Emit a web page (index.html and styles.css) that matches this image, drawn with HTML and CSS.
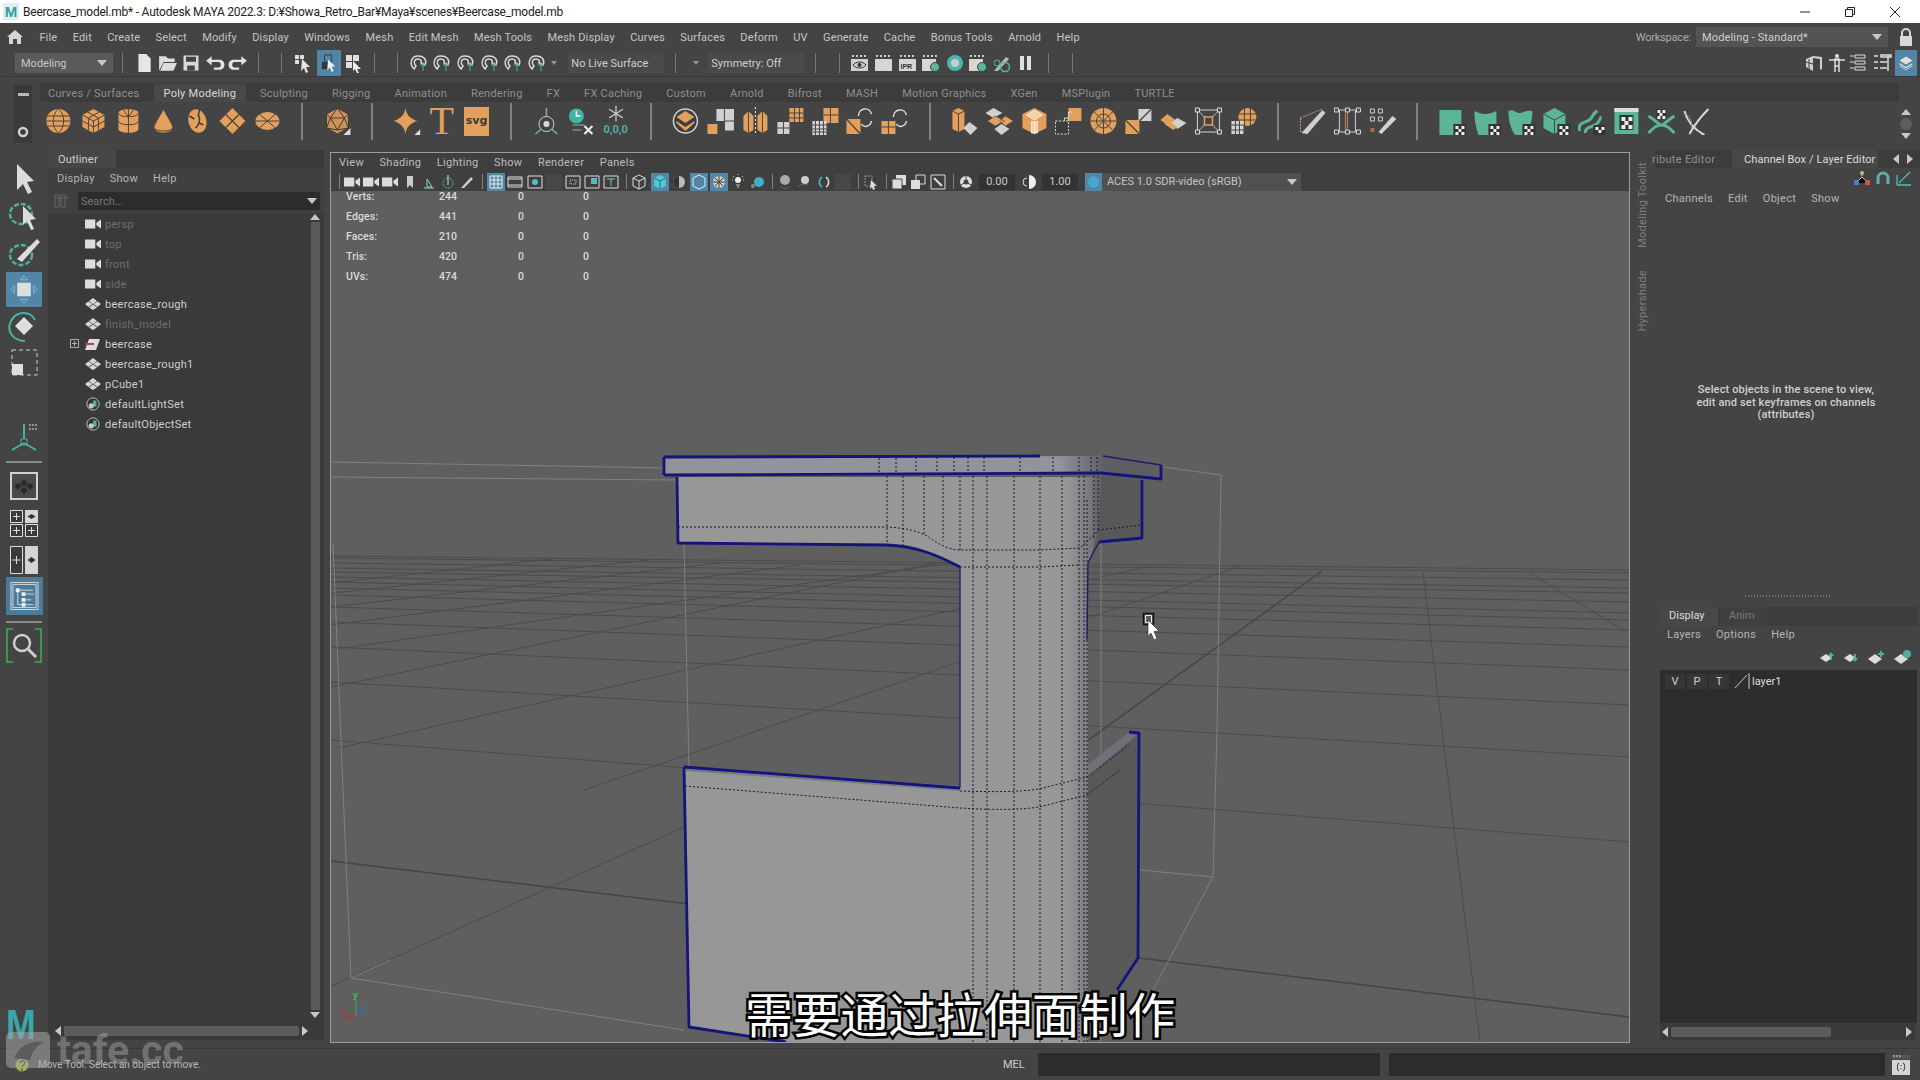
FILE: index.html
```html
<!DOCTYPE html>
<html lang="en">
<head>
<meta charset="utf-8">
<title>Beercase_model.mb - Autodesk MAYA</title>
<link rel="stylesheet" href="styles.css">
</head>
<body>
<svg class="defs" width="0" height="0" aria-hidden="true">
  <defs>
    <symbol id="s-sphere" viewBox="0 0 28 28"><circle cx="14" cy="14" r="12" fill="#e3a05c"/><path d="M3 9h22M2 14h24M3 19h22M14 2c-7 5-7 19 0 24M14 2c7 5 7 19 0 24" fill="none" stroke="#4a4238" stroke-width="1"/></symbol>
    <symbol id="s-cube" viewBox="0 0 28 28"><path d="M14 2l11 6v12l-11 6-11-6V8z" fill="#e3a05c"/><path d="M3 8l11 6 11-6M14 14v12M8 5l11 6v12M20 5L9 11v12M3 14l11 6 11-6" fill="none" stroke="#4a4238"/></symbol>
    <symbol id="s-cyl" viewBox="0 0 28 28"><path d="M4 6c0-5 20-5 20 0v16c0 5-20 5-20 0z" fill="#e3a05c"/><path d="M4 6c0 5 20 5 20 0M4 14c0 5 20 5 20 0M14 2v8M14 10v16M9 3l5 7 5-7" fill="none" stroke="#4a4238"/></symbol>
    <symbol id="s-cone" viewBox="0 0 28 28"><path d="M14 3c3 6 9 14 9 18 0 6-18 6-18 0 0-4 6-12 9-18z" fill="#e3a05c"/><path d="M5 21c0 4 18 4 18 0" fill="none" stroke="#4a4238"/></symbol>
    <symbol id="s-torus" viewBox="0 0 28 28"><ellipse cx="14" cy="14" rx="9" ry="12" fill="#e3a05c" transform="rotate(-15 14 14)"/><path d="M14 8c3 1 3 9-2 13M6 9l5 3M20 18l-4-2M16 3l-1 6" fill="none" stroke="#3e3e3e" stroke-width="1.5"/></symbol>
    <symbol id="s-plane" viewBox="0 0 28 28"><path d="M14 1l13 13-13 13L1 14z" fill="#e3a05c"/><path d="M7.500 7.500l13 13M20.500 7.500l-13 13" stroke="#444" stroke-width="1.200"/></symbol>
    <symbol id="s-disc" viewBox="0 0 28 28"><ellipse cx="14" cy="14" rx="12" ry="9" fill="#e3a05c"/><path d="M2 14h24M6 7l16 14M22 7L6 21" stroke="#444"/></symbol>
    <symbol id="s-platonic" viewBox="0 0 28 28"><path d="M14 1l11 6v14l-11 6-11-6V7z" fill="#cf9257" stroke="#3a3a3a"/><path d="M14 1L7 11l7 12 7-12zM3 7l4 4-4 10 11 2 11-2-4-10 4-4M7 11h14" fill="none" stroke="#3a3a3a"/><path d="M20 28l7-7v7z" fill="#ddd"/></symbol>
    <symbol id="s-star" viewBox="0 0 28 28"><path d="M13 1c1 7 5 11 12 13-7 2-11 6-12 13-1-7-5-11-12-13 7-2 11-6 12-13z" fill="#e3a05c"/><path d="M22 28l6-6v6z" fill="#ddd"/></symbol>
    <symbol id="s-axis" viewBox="0 0 28 28"><path d="M14 1v9" stroke="#6fb79b" stroke-width="1.500"/><circle cx="14" cy="17" r="7.500" fill="none" stroke="#cfcfcf"/><circle cx="14" cy="17" r="3" fill="#d8d8d8"/><path d="M3 27l6-5M25 27l-6-5" stroke="#6fb79b" stroke-width="1.500"/></symbol>
    <symbol id="s-clock" viewBox="0 0 28 28"><circle cx="9" cy="9" r="7.500" fill="#42b3a6"/><path d="M9 4v5h4" fill="none" stroke="#fff" stroke-width="1.500"/><path d="M5 18h12M5 23h9" stroke="#8fb5a8"/><path d="M17 19l8 8M25 19l-8 8" stroke="#eee" stroke-width="2"/></symbol>
    <symbol id="s-snow" viewBox="0 0 28 28"><path d="M14 1v18M6 5l16 10M22 5L6 15" stroke="#c9c9c9" stroke-width="1.500"/></symbol>
    <symbol id="s-ball2" viewBox="0 0 28 28"><circle cx="14" cy="14" r="12" fill="#3e3e3e" stroke="#cfcfcf" stroke-width="1.500"/><path d="M14 4l9 6-9 6-9-6z" fill="#e3a05c"/><path d="M5 14l9 6 9-6v2l-9 8-9-8z" fill="#e3a05c"/></symbol>
    <symbol id="s-sq1" viewBox="0 0 28 28"><path d="M10 2h18v12H10z" fill="#d0d0d0"/><path d="M18 2v12M18 14v10h10V14z" fill="#d0d0d0" stroke="#444"/><path d="M1 17h10v10H1z" fill="#e3a05c"/></symbol>
    <symbol id="s-mirror" viewBox="0 0 28 28"><path d="M2 9l5-5 5 5v14l-5 3-5-3z" fill="#e3a05c"/><path d="M16 9l5-5 5 5v14l-5 3-5-3z" fill="#e3a05c"/><path d="M7 4v22M21 4v22" stroke="#444"/><path d="M14 0v28" stroke="#eee" stroke-dasharray="2 2"/></symbol>
    <symbol id="s-grid1" viewBox="0 0 28 28"><path d="M1 15h12v12H1z" fill="#d0d0d0"/><path d="M13 1h14v14H13z" fill="#e3a05c"/><path d="M7 15v12M1 21h12M18 1v14M23 1v14M13 6h14M13 11h14" stroke="#444"/></symbol>
    <symbol id="s-grid2" viewBox="0 0 28 28"><path d="M12 1h15v15H12z" fill="#e3a05c"/><path d="M12 8h15M19 1v15" stroke="#444"/><path d="M1 14h14v14H1z" fill="#d8d8d8"/><path d="M4 14v14M8 14v14M12 14v14M1 18h14M1 22h14M1 25h14" stroke="#444"/></symbol>
    <symbol id="s-rot1" viewBox="0 0 28 28"><path d="M1 12l14 0v15H1z" fill="#e3a05c"/><path d="M1 12l14 15" stroke="#444" stroke-width="1.300"/><path d="M13 9c0-8 11-10 13-2M26 14c-1 6-8 7-10 3" fill="none" stroke="#ddd" stroke-width="1.500"/></symbol>
    <symbol id="s-rot2" viewBox="0 0 28 28"><path d="M1 14h14v13H1z" fill="#e3a05c"/><path d="M8 14v13M1 20h14" stroke="#444"/><path d="M13 10c0-8 11-10 13-2M26 14c-1 6-8 7-10 3" fill="none" stroke="#ddd" stroke-width="1.500"/></symbol>
    <symbol id="s-prism" viewBox="0 0 28 28"><path d="M2 4l6-3 6 3v18l-6 3-6-3z" fill="#e3a05c"/><path d="M8 7v18M2 4l6 3 6-3" fill="none" stroke="#4a4238"/><path d="M13 21l6-6 8 6-7 7z" fill="#d0d0d0"/></symbol>
    <symbol id="s-stack" viewBox="0 0 28 28"><path d="M8 1l9 5-9 5-8-5z" fill="#d0d0d0"/><path d="M10 9l9 5-9 5-8-5zM20 9l8 5-8 5-6-5z" fill="#e3a05c" stroke="#444" stroke-width=".600"/><path d="M16 17l8 5-8 6-7-6z" fill="#d0d0d0"/></symbol>
    <symbol id="s-bevel" viewBox="0 0 28 28"><path d="M14 1l12 6v14l-12 6-12-6V7z" fill="#e3a05c"/><path d="M14 3l8 5-8 5-8-5zM14 14v13M11 14v12h6V14" fill="#f3d0a6" stroke="#fff" stroke-width=".700"/></symbol>
    <symbol id="s-bridge" viewBox="0 0 28 28"><path d="M14 1h13v13H14z" fill="#e3a05c"/><path d="M1 14h13v13H1z" fill="#3d3d3d" stroke="#ddd" stroke-dasharray="2 1.500"/><path d="M14 14V5h4M10 14v-3h4" fill="none" stroke="#ddd"/></symbol>
    <symbol id="s-wheel" viewBox="0 0 28 28"><circle cx="14" cy="14" r="13" fill="#e3a05c"/><circle cx="14" cy="14" r="7" fill="none" stroke="#4a4238"/><path d="M1 14h26M14 1v26M5 5l18 18M23 5L5 23" stroke="#4a4238"/></symbol>
    <symbol id="s-split" viewBox="0 0 28 28"><path d="M1 13h14v14H1z" fill="#e3a05c"/><path d="M1 13l14 14" stroke="#444" stroke-width="1.300"/><path d="M14 2h13v12H14z" fill="#d0d0d0"/><path d="M15 14L27 2" stroke="#444" stroke-width="1.300"/></symbol>
    <symbol id="s-dia" viewBox="0 0 28 28"><path d="M8 7l8 6-8 5-7-5z" fill="#e3a05c"/><path d="M18 11l9 5-9 6-7-6z" fill="#d0d0d0"/><path d="M9 14l9 6-4 3-9-6z" fill="#e3a05c"/></symbol>
    <symbol id="s-hand" viewBox="0 0 28 28"><path d="M3 3h22v22H3z" fill="none" stroke="#d0d0d0"/><path d="M1 1h4v4H1zM23 1h4v4h-4zM1 23h4v4H1zM23 23h4v4h-4z" fill="#444" stroke="#ddd"/><path d="M10 10h8v8h-8z" fill="none" stroke="#e3a05c" stroke-width="1.500"/><path d="M5 5l5 5M23 5l-5 5M5 23l5-5M23 23l-5-5" stroke="#bbb"/></symbol>
    <symbol id="s-gball" viewBox="0 0 28 28"><circle cx="18" cy="10" r="9" fill="#e3a05c"/><path d="M9 7h18M9 13h18M15 1v18M21 1v18" stroke="#4a4238"/><path d="M2 14h12v13H2z" fill="#d4d4d4"/><path d="M6 14v13M10 14v13M2 18h12M2 23h12" stroke="#444"/></symbol>
    <symbol id="s-pen" viewBox="0 0 28 28"><path d="M3 26L24 3l3 3L9 27z" fill="#cfcfcf"/><path d="M2 11l22-9M2 11v15" fill="none" stroke="#c6a17a" stroke-dasharray="2 1"/></symbol>
    <symbol id="s-cut" viewBox="0 0 28 28"><path d="M6 3h16v22H6z" fill="none" stroke="#d0d0d0"/><path d="M1 1h4v4H1zM12 1h4v4h-4zM23 1h4v4h-4zM1 23h4v4H1zM12 23h4v4h-4zM23 23h4v4h-4z" fill="#444" stroke="#ddd"/><path d="M14 5v18M12 5v18" stroke="#c08a5c"/></symbol>
    <symbol id="s-paint" viewBox="0 0 28 28"><path d="M2 2h4v4H2zM10 2h4v4h-4zM2 10h4v4H2zM10 10h4v4h-4z" fill="none" stroke="#d0d0d0"/><path d="M2 21h4v4H2z" fill="#b0644a"/><path d="M10 25l14-16 4 3-15 15z" fill="#d0d0d0"/></symbol>
    <symbol id="s-t1" viewBox="0 0 28 28"><path d="M1 3h22v25H1z" fill="#5db597"/><path d="M15 17h13v11H15z" fill="#333"/><path d="M17 19h3v3h-3zM23 19h3v3h-3zM20 22h3v3h-3zM17 25h3v3h-3zM23 25h3v3h-3z" fill="#eee"/></symbol>
    <symbol id="s-t2" viewBox="0 0 28 28"><path d="M1 4c8 4 14 4 22 0v24H5C2 20 1 12 1 4z" fill="#5db597"/><path d="M15 17h13v11H15z" fill="#333"/><path d="M17 19h3v3h-3zM23 19h3v3h-3zM20 22h3v3h-3zM17 25h3v3h-3zM23 25h3v3h-3z" fill="#eee"/></symbol>
    <symbol id="s-t3" viewBox="0 0 28 28"><path d="M1 4c6-3 8 3 12 2s7-3 12-2c0 8-2 20-8 24H8C4 24 1 14 1 4z" fill="#5db597"/><path d="M15 17h13v11H15z" fill="#333"/><path d="M17 19h3v3h-3zM23 19h3v3h-3zM20 22h3v3h-3zM17 25h3v3h-3zM23 25h3v3h-3z" fill="#eee"/></symbol>
    <symbol id="s-t4" viewBox="0 0 28 28"><path d="M12 1l11 6v14l-11 6L1 21V7z" fill="#5db597"/><path d="M1 7l11 6 11-6M12 13v14" stroke="#444" fill="none"/><path d="M15 17h13v11H15z" fill="#333"/><path d="M17 19h3v3h-3zM23 19h3v3h-3zM20 22h3v3h-3zM17 25h3v3h-3zM23 25h3v3h-3z" fill="#eee"/></symbol>
    <symbol id="s-t5" viewBox="0 0 28 28"><path d="M2 24c-2-9 6-8 10-11s3-7 8-9" fill="none" stroke="#5db597" stroke-width="3"/><path d="M8 26c-1-6 7-6 11-9s3-6 5-7" fill="none" stroke="#5db597" stroke-width="3"/><path d="M16 18h12v10H16z" fill="#333"/><path d="M18 20h3v3h-3zM24 20h3v3h-3zM21 23h3v3h-3z" fill="#eee"/></symbol>
    <symbol id="s-t6" viewBox="0 0 28 28"><path d="M2 1h24v26H2z" fill="#5db597"/><path d="M2 1h24v4H2z" fill="#ddd"/><path d="M7 8h14v15H7z" fill="#333"/><path d="M9 10h4v4H9zM16 10h4v4h-4zM12 14h4v4h-4zM9 18h4v4H9zM16 18h4v4h-4z" fill="#eee"/></symbol>
    <symbol id="s-t7" viewBox="0 0 28 28"><path d="M1 9c7 4 10 9 13 9s6-5 13-9M1 26c5-5 8-8 13-8s8 3 13 8" fill="none" stroke="#5db597" stroke-width="3"/><path d="M9 2h10v10H9z" fill="#333"/><path d="M10 3h3v3h-3zM15 3h3v3h-3zM12 6h3v3h-3zM10 9h3v3h-3zM15 9h3v3h-3z" fill="#eee"/></symbol>
    <symbol id="s-t8" viewBox="0 0 28 28"><path d="M2 4c3 11 9 18 20 24M26 2C18 10 12 18 7 27" fill="none" stroke="#d8d8d8" stroke-width="2"/><path d="M1 7c6 0 9 6 8 14" fill="none" stroke="#888"/></symbol>
    <symbol id="s-new" viewBox="0 0 16 18"><path d="M3 1h7l4 4v12H3z" fill="#e6e6e6"/></symbol>
    <symbol id="s-open" viewBox="0 0 18 16"><path d="M1 2h6l2 2h6v3H5L1 15z" fill="#ddd"/><path d="M5 8h12l-3 7H2z" fill="#ddd"/></symbol>
    <symbol id="s-save" viewBox="0 0 16 16"><path d="M2 2h12v12H2z" fill="#d8d8d8"/><path d="M4 3h8v4H4z" fill="#444"/><path d="M5 10h6v4H5z" fill="#444"/></symbol>
    <symbol id="s-undo" viewBox="0 0 18 14"><path d="M6 1L1 5l5 4V6h6c3 0 3 5 0 5H8v2h5c6 0 6-9 0-9H6z" fill="#e2e2e2"/></symbol>
    <symbol id="s-redo" viewBox="0 0 18 14"><path d="M12 1l5 4-5 4V6H6c-3 0-3 5 0 5h4v2H5C-1 13-1 4 5 4h7z" fill="#e2e2e2"/></symbol>
    <symbol id="s-sel1" viewBox="0 0 20 20"><path d="M2 2h4v4H2zM7 2h4v4H7zM2 7h4v4H2z" fill="#ddd"/><path d="M9 6l8 8-4 0 2 5-2 1-2-5-3 3z" fill="#e6e6e6"/></symbol>
    <symbol id="s-sel2" viewBox="0 0 20 20"><path d="M5 1h8v8H5z" fill="none" stroke="#2c3a44"/><path d="M2 9h7v8H2z" fill="#2c3a44"/><path d="M9 6l8 8-4 0 2 5-2 1-2-5-3 3z" fill="#f0f0f0"/></symbol>
    <symbol id="s-sel3" viewBox="0 0 20 20"><path d="M2 2h6v6H2zM9 2h6v6H9zM2 9h6v6H2z" fill="#e0e0e0"/><path d="M9 8l8 8-4 0 2 4-2 0-2-4-2 2z" fill="#f0f0f0"/></symbol>
    <symbol id="s-snap" viewBox="0 0 20 20"><path d="M6 16C1 11 3 3 10 3s9 5 7 9l-4-2c1-2 0-4-3-4-4 0-5 4-2 7z" fill="none" stroke="#d8d8d8" stroke-width="1.500"/><path d="M12 12h6M15 9v9" stroke="#58b6a0"/></symbol>
    <symbol id="s-reye" viewBox="0 0 20 20"><path d="M2 2h2v2H2zM6 2h2v2H6zM10 2h2v2h-2zM14 2h2v2h-2z" fill="#ccc"/><path d="M1 6h17v12H1z" fill="#cfcfcf"/><path d="M3 12c3-4 10-4 13 0-3 4-10 4-13 0z" fill="none" stroke="#333"/><circle cx="9.500" cy="12" r="2" fill="#333"/></symbol>
    <symbol id="s-render" viewBox="0 0 20 20"><path d="M2 2h2v2H2zM6 2h2v2H6zM10 2h2v2h-2zM14 2h2v2h-2z" fill="#ccc"/><path d="M1 6h17v12H1z" fill="#d6d6d6"/></symbol>
    <symbol id="s-render2" viewBox="0 0 20 20"><path d="M2 2h2v2H2zM6 2h2v2H6zM10 2h2v2h-2zM14 2h2v2h-2z" fill="#ccc"/><path d="M1 6h14v12H1z" fill="#d6d6d6"/><circle cx="14" cy="14" r="4.500" fill="#58b6a0" stroke="#444"/></symbol>
    <symbol id="s-cam" viewBox="0 0 14 12"><path d="M0 2h9v8H0zM10 5l4-3v8l-4-3z" fill="#dcdcdc"/></symbol>
    <symbol id="s-layerstack" viewBox="0 0 20 20"><path d="M10 2l8 5-8 5-8-5z" fill="#e0e0e0"/><path d="M2 10l8 5 8-5v2l-8 5-8-5zM2 13l8 5 8-5v1l-8 5-8-5z" fill="#e0e0e0"/></symbol>
    <symbol id="s-node" viewBox="0 0 16 12"><path d="M8 0l4 3-4 3-4-3zM3.500 3.500l4 2.500-4 3-3.500-3zM12.500 3.500l3.500 2.500-3.500 3-4-3zM8 6.500l4 3-4 2.500-4-2.500z" fill="#d6d6d6"/></symbol>
    <symbol id="s-set" viewBox="0 0 16 16"><circle cx="8" cy="8" r="7" fill="#333" stroke="#cfcfcf"/><path d="M8 4h4v7H8z" fill="#4fb0a0"/><circle cx="6" cy="10" r="3" fill="#d5bcd0"/></symbol>
  </defs>
</svg>

<header class="titlebar">
  <span class="applogo">M</span>
  <span class="title-text">Beercase_model.mb* - Autodesk MAYA 2022.3: D:¥Showa_Retro_Bar¥Maya¥scenes¥Beercase_model.mb</span>
  <div class="winbtns">
    <svg width="12" height="12" viewBox="0 0 12 12"><path d="M1 6h10" stroke="#222"/></svg>
    <svg width="12" height="12" viewBox="0 0 12 12"><path d="M1.500 3.500h7v7h-7zM3.500 3.500v-2h7v7h-2" fill="none" stroke="#222"/></svg>
    <svg width="12" height="12" viewBox="0 0 12 12"><path d="M1 1l10 10M11 1L1 11" stroke="#222"/></svg>
  </div>
</header>

<nav class="menubar">
  <svg class="home" width="16" height="14" viewBox="0 0 16 14"><path d="M8 0L0 7h2v7h4V9h4v5h4V7h2z" fill="#d4d4d4"/></svg>
  <span>File</span><span>Edit</span><span>Create</span><span>Select</span><span>Modify</span><span>Display</span><span>Windows</span><span>Mesh</span><span>Edit Mesh</span><span>Mesh Tools</span><span>Mesh Display</span><span>Curves</span><span>Surfaces</span><span>Deform</span><span>UV</span><span>Generate</span><span>Cache</span><span>Bonus Tools</span><span>Arnold</span><span>Help</span>
  <div class="workspace">
    <span>Workspace:</span>
    <div class="combo combo-ws">Modeling - Standard*<i class="tri"></i></div>
    <svg width="14" height="18" viewBox="0 0 14 18"><path d="M3 8V5a4 4 0 018 0v3" fill="none" stroke="#d8d8d8" stroke-width="2"/><path d="M1 8h12v10H1z" fill="#d8d8d8"/></svg>
  </div>
</nav>

<div class="statusline">
  <div class="combo combo-mode">Modeling<i class="tri"></i></div>
  <i class="sep s-a"></i>
  <svg class="st st-first"><use href="#s-new"/></svg>
  <svg class="st"><use href="#s-open"/></svg>
  <svg class="st"><use href="#s-save"/></svg>
  <svg class="st"><use href="#s-undo"/></svg>
  <svg class="st"><use href="#s-redo"/></svg>
  <i class="sep s-b"></i><i class="sep s-c"></i>
  <svg class="st st-sel"><use href="#s-sel1"/></svg>
  <svg class="st st-on"><use href="#s-sel2"/></svg>
  <svg class="st"><use href="#s-sel3"/></svg>
  <i class="sep s-d"></i><i class="sep s-c"></i>
  <svg class="st st-snap1"><use href="#s-snap"/></svg>
  <svg class="st"><use href="#s-snap"/></svg>
  <svg class="st"><use href="#s-snap"/></svg>
  <svg class="st"><use href="#s-snap"/></svg>
  <svg class="st"><use href="#s-snap"/></svg>
  <svg class="st"><use href="#s-snap"/></svg>
  <i class="tri tri-small"></i>
  <div class="field field-live">No Live Surface</div>
  <i class="sep s-e"></i>
  <i class="tri tri-small tri-sym"></i>
  <div class="field field-sym">Symmetry: Off</div>
  <i class="sep s-e"></i><i class="sep s-f"></i>
  <svg class="st st-r1"><use href="#s-reye"/></svg>
  <svg class="st"><use href="#s-render"/></svg>
  <svg class="st" viewBox="0 0 20 20"><use href="#s-render" width="20" height="20"/><text x="2.500" y="16" class="ipr">IPR</text></svg>
  <svg class="st"><use href="#s-render2"/></svg>
  <svg class="st" viewBox="0 0 20 20"><circle cx="10" cy="10" r="8" fill="#49b6b0"/><circle cx="10" cy="10" r="4" fill="#ccc"/></svg>
  <svg class="st"><use href="#s-render2"/></svg>
  <svg class="st" viewBox="0 0 20 20"><path d="M2 18L14 4l3 2L6 18z" fill="#bbb"/><circle cx="13" cy="14" r="4.500" fill="none" stroke="#58b6a0" stroke-width="1.500"/><circle cx="5" cy="10" r="3" fill="none" stroke="#58b6a0"/></svg>
  <svg class="st" viewBox="0 0 20 20"><path d="M5 3h4v14H5zM12 3h4v14h-4z" fill="#e0e0e0"/></svg>
  <i class="sep s-g"></i><i class="sep s-f"></i>
  <div class="status-right">
    <svg class="st" viewBox="0 0 20 20"><path d="M2 6l7-3 9 1v12l-2 1V6L9 5v13L2 14z" fill="#cfcfcf"/><path d="M5 6v10M2 9l7 2" stroke="#444"/></svg>
    <svg class="st" viewBox="0 0 20 20"><circle cx="10" cy="3" r="2" fill="#ddd"/><path d="M2 7h16M8 6h4v7H8zM8 13v6M12 13v6" stroke="#ddd" stroke-width="1.500" fill="none"/></svg>
    <svg class="st" viewBox="0 0 20 20"><path d="M6 2h10v3H6zM6 8h10v3H6zM6 14h10v3H6zM1 3h4M1 9h4M1 15h4" fill="none" stroke="#ddd"/></svg>
    <svg class="st" viewBox="0 0 20 20"><path d="M9 2h10v2H9zM16 2v16M2 3h4M2 9h4M2 15h4M8 9h7M8 15h7" fill="none" stroke="#ddd" stroke-width="1.500"/></svg>
    <svg class="st st-on st-last"><use href="#s-layerstack"/></svg>
  </div>
</div>

<section class="shelf">
  <div class="shelf-side">
    <i class="minus"></i>
    <svg width="12" height="12" viewBox="0 0 12 12"><circle cx="6" cy="6" r="4" fill="none" stroke="#cfcfcf" stroke-width="2.500"/></svg>
  </div>
  <div class="shelf-main">
    <div class="shelf-tabs">
      <span>Curves / Surfaces</span><span class="active">Poly Modeling</span><span>Sculpting</span><span>Rigging</span><span>Animation</span><span>Rendering</span><span>FX</span><span>FX Caching</span><span>Custom</span><span>Arnold</span><span>Bifrost</span><span>MASH</span><span>Motion Graphics</span><span>XGen</span><span>MSPlugin</span><span>TURTLE</span>
    </div>
    <div class="shelf-icons">
      <svg class="si"><use href="#s-sphere"/></svg><svg class="si"><use href="#s-cube"/></svg><svg class="si"><use href="#s-cyl"/></svg><svg class="si"><use href="#s-cone"/></svg><svg class="si"><use href="#s-torus"/></svg><svg class="si"><use href="#s-plane"/></svg><svg class="si"><use href="#s-disc"/></svg>
      <div class="cell"><i class="shelf-sep"></i></div>
      <svg class="si"><use href="#s-platonic"/></svg>
      <div class="cell"><i class="shelf-sep"></i></div>
      <svg class="si"><use href="#s-star"/></svg>
      <div class="cell cell-t">T</div>
      <div class="cell"><span class="svgbox">svg</span></div>
      <div class="cell"><i class="shelf-sep"></i></div>
      <svg class="si"><use href="#s-axis"/></svg><svg class="si"><use href="#s-clock"/></svg>
      <div class="cell cell-snow"><svg class="snow"><use href="#s-snow"/></svg><span>0,0,0</span></div>
      <div class="cell"><i class="shelf-sep"></i></div>
      <svg class="si"><use href="#s-ball2"/></svg><svg class="si"><use href="#s-sq1"/></svg><svg class="si"><use href="#s-mirror"/></svg><svg class="si"><use href="#s-grid1"/></svg><svg class="si"><use href="#s-grid2"/></svg><svg class="si"><use href="#s-rot1"/></svg><svg class="si"><use href="#s-rot2"/></svg>
      <div class="cell"><i class="shelf-sep"></i></div>
      <svg class="si"><use href="#s-prism"/></svg><svg class="si"><use href="#s-stack"/></svg><svg class="si"><use href="#s-bevel"/></svg><svg class="si"><use href="#s-bridge"/></svg><svg class="si"><use href="#s-wheel"/></svg><svg class="si"><use href="#s-split"/></svg><svg class="si"><use href="#s-dia"/></svg><svg class="si"><use href="#s-hand"/></svg><svg class="si"><use href="#s-gball"/></svg>
      <div class="cell"><i class="shelf-sep"></i></div>
      <svg class="si"><use href="#s-pen"/></svg><svg class="si"><use href="#s-cut"/></svg><svg class="si"><use href="#s-paint"/></svg>
      <div class="cell"><i class="shelf-sep"></i></div>
      <svg class="si"><use href="#s-t1"/></svg><svg class="si"><use href="#s-t2"/></svg><svg class="si"><use href="#s-t3"/></svg><svg class="si"><use href="#s-t4"/></svg><svg class="si"><use href="#s-t5"/></svg><svg class="si"><use href="#s-t6"/></svg><svg class="si"><use href="#s-t7"/></svg><svg class="si"><use href="#s-t8"/></svg>
    </div>
  </div>
  <div class="shelf-scroll"><i class="tri tri-up"></i><b></b><i class="tri"></i></div>
</section>

<main class="main">
  <aside class="toolbox">
    <svg class="tool" viewBox="0 0 34 34"><path d="M10 3l17 17-7 1 5 10-4 2-5-10-6 6z" fill="#dcdcdc"/></svg>
    <svg class="tool" viewBox="0 0 34 34"><ellipse cx="14" cy="16" rx="11" ry="10" fill="none" stroke="#4fb0a0" stroke-width="2.500" stroke-dasharray="5 2"/><path d="M16 8l13 13-6 1 4 9-3 1-4-9-4 4z" fill="#dcdcdc"/></svg>
    <svg class="tool" viewBox="0 0 34 34"><ellipse cx="14" cy="20" rx="11" ry="10" fill="none" stroke="#4fb0a0" stroke-width="2.500" stroke-dasharray="5 2"/><path d="M10 24l20-20 3 3-18 20z" fill="#dcdcdc"/></svg>
    <div class="tool-on"><svg viewBox="0 0 34 34"><path d="M10 10h14v14H10z" fill="#dedede"/><path d="M3 17l4-4v8zM31 17l-4-4v8zM17 3l-4 4h8zM17 31l-4-4h8z" fill="none" stroke="#88b8d8"/></svg></div>
    <svg class="tool" viewBox="0 0 34 34"><path d="M17 8l9 9-9 9-9-9z" fill="#dedede"/><path d="M28 11C23 1 9 2 4 12s2 20 14 20" fill="none" stroke="#4fb0a0" stroke-width="2"/></svg>
    <svg class="tool" viewBox="0 0 34 34"><path d="M5 4h25v25H5z" fill="none" stroke="#ccc" stroke-dasharray="4 3"/><path d="M5 18h11v11H5z" fill="#dedede"/></svg>
    <svg class="tool tool-gap" viewBox="0 0 34 34"><path d="M17 5v14M17 24L5 31M17 24l12 7" stroke="#4fb0a0" stroke-width="2"/><path d="M14 20h6v6h-6z" fill="none" stroke="#4fb0a0"/><path d="M22 6h9M22 10h9" stroke="#ddd" stroke-dasharray="2 1"/></svg>
    <i class="tool-line"></i>
    <svg class="view view-one" viewBox="0 0 28 28"><path d="M0 0h28v28H0z" fill="#d0d0d0"/><path d="M2 2h24v24H2z" fill="#4a4a4a"/><path d="M14 7l4 4-4 4-4-4zM8 11l4 3-4 4-4-4zM20 11l4 3-4 4-4-4zM14 15l4 3-4 4-4-4z" fill="#2a2a2a"/></svg>
    <svg class="view view-four" viewBox="0 0 28 27"><path d="M.5.500h12v12H.5zM.5 14.500h12v12H.5zM15.500 14.500h12v12h-12z" fill="#3b3b3b" stroke="#ddd"/><path d="M15 0h13v13H15z" fill="#d4d4d4"/><path d="M21.500 4l4 2.500-4 2.500-4-2.500z" fill="#333"/><path d="M6.500 3v7M3 6.500h7M6.500 17v7M3 20.500h7M21.500 17v7M18 20.500h7" stroke="#ddd"/></svg>
    <svg class="view view-two" viewBox="0 0 28 28"><path d="M.5.500h12v27H.5z" fill="#3b3b3b" stroke="#ddd"/><path d="M15 0h13v28H15z" fill="#d4d4d4"/><path d="M21.500 11l4 3-4 3-4-3z" fill="#333"/><path d="M6.500 10v8M2.500 14h8" stroke="#ddd"/></svg>
    <div class="view-on"><svg viewBox="0 0 30 30"><path d="M1 1h28v28H1zM3 3h24v24H3z" fill="none" stroke="#dcdcdc"/><path d="M6 7h4v4H6zM12 11h4v4h-4zM12 17h4v4h-4zM12 22h4v4h-4z" fill="#eee"/><path d="M10 9h14M16 13h9M16 19h6M16 24h8M8 11v13h4" fill="none" stroke="#dcdcdc"/></svg></div>
    <i class="tool-line tool-line2"></i>
    <svg class="mag" viewBox="0 0 36 35"><path d="M7 1H1v33h6M29 1h6v33h-6" fill="none" stroke="#3fae58" stroke-width="1.500"/><circle cx="16" cy="15" r="8" fill="none" stroke="#cfcfcf" stroke-width="2.500"/><path d="M22 21l8 8" stroke="#cfcfcf" stroke-width="3"/></svg>
  </aside>

  <section class="outliner">
    <div class="ol-tabs"><span class="ol-tab">Outliner</span></div>
    <div class="submenu ol-menu"><span>Display</span><span>Show</span><span>Help</span></div>
    <div class="ol-search">
      <svg width="16" height="14" viewBox="0 0 16 14"><path d="M1 1h4v12H1zM7 1h4v12H7zM1 4h14" fill="none" stroke="#666"/></svg>
      <div class="searchbox">Search...<i class="tri"></i></div>
    </div>
    <div class="ol-body">
      <ul class="ol-list">
        <li class="dim"><svg class="ol-ic"><use href="#s-cam"/></svg>persp</li>
        <li class="dim"><svg class="ol-ic"><use href="#s-cam"/></svg>top</li>
        <li class="dim"><svg class="ol-ic"><use href="#s-cam"/></svg>front</li>
        <li class="dim"><svg class="ol-ic"><use href="#s-cam"/></svg>side</li>
        <li><svg class="ol-ic"><use href="#s-node"/></svg>beercase_rough</li>
        <li class="dim"><svg class="ol-ic"><use href="#s-node"/></svg>finish_model</li>
        <li><i class="expand"></i><svg class="ol-ic" viewBox="0 0 16 14"><path d="M4 2h11l-4 11H0z" fill="#ddd"/><path d="M0 7h9" stroke="#a4484f" stroke-width="2"/></svg>beercase</li>
        <li><svg class="ol-ic"><use href="#s-node"/></svg>beercase_rough1</li>
        <li><svg class="ol-ic"><use href="#s-node"/></svg>pCube1</li>
        <li><svg class="ol-ic"><use href="#s-set"/></svg>defaultLightSet</li>
        <li><svg class="ol-ic"><use href="#s-set"/></svg>defaultObjectSet</li>
      </ul>
      <div class="vscroll"><i class="tri tri-up"></i><b></b><i class="tri"></i></div>
    </div>
    <div class="hscroll hscroll-ol"><i class="tri-l"></i><b></b><i class="tri-r"></i></div>
  </section>

  <section class="viewport">
    <div class="vp-menu"><span>View</span><span>Shading</span><span>Lighting</span><span>Show</span><span>Renderer</span><span>Panels</span></div>
    <div class="vp-tools">
      <i class="vsep"></i>
      <svg class="vt"><use href="#s-cam"/></svg><svg class="vt"><use href="#s-cam"/></svg><svg class="vt"><use href="#s-cam"/></svg>
      <svg class="vt" viewBox="0 0 16 16"><path d="M5 2h6v12l-3-3-3 3z" fill="#ccc"/></svg>
      <svg class="vt" viewBox="0 0 16 16"><path d="M3 14h10M6 13V5l5 8z" stroke="#8db" fill="none"/></svg>
      <svg class="vt" viewBox="0 0 16 16"><circle cx="8" cy="9" r="5" fill="none" stroke="#5bb" stroke-dasharray="2 1"/><path d="M8 1v10" stroke="#ddd"/></svg>
      <svg class="vt" viewBox="0 0 16 16"><path d="M2 14L12 3l2 2L5 14z" fill="#ccc"/></svg>
      <i class="vsep"></i>
      <svg class="vt vt-on" viewBox="0 0 16 16"><path d="M2 2h12v12H2zM6 2v12M10 2v12M2 6h12M2 10h12" fill="none" stroke="#eee"/></svg>
      <svg class="vt" viewBox="0 0 16 16"><path d="M1 3h14v10H1zM1 5h14M1 11h14" fill="none" stroke="#ddd"/></svg>
      <svg class="vt" viewBox="0 0 16 16"><path d="M1 2h14v12H1z" fill="none" stroke="#ddd"/><circle cx="8" cy="8" r="3" fill="#5bc"/></svg>
      <span class="vt vt-dark"></span>
      <svg class="vt" viewBox="0 0 16 16"><path d="M1 2h14v12H1z" fill="none" stroke="#ddd"/><path d="M5 6h6v4H5z" fill="none" stroke="#ccc" stroke-dasharray="1 1"/></svg>
      <svg class="vt" viewBox="0 0 16 16"><path d="M1 2h14v12H1z" fill="none" stroke="#ddd"/><path d="M7 4h6v6H7z" fill="#5bb"/></svg>
      <svg class="vt" viewBox="0 0 16 16"><path d="M1 2h14v12H1z" fill="none" stroke="#ddd"/><path d="M4 5h8M8 5v7" stroke="#7cc"/></svg>
      <i class="vsep"></i>
      <svg class="vt" viewBox="0 0 16 16"><path d="M8 1l6 3v8l-6 3-6-3V4zM2 4l6 3 6-3M8 7v8" fill="none" stroke="#ddd"/></svg>
      <svg class="vt vt-on" viewBox="0 0 16 16"><path d="M8 1l6 3v8l-6 3-6-3V4z" fill="#50c8d8"/><path d="M2 4l6 3 6-3M8 7v8" fill="none" stroke="#2a6a78"/></svg>
      <svg class="vt" viewBox="0 0 16 16"><circle cx="8" cy="8" r="6" fill="#bbb"/><path d="M8 2a6 6 0 000 12z" fill="#333"/></svg>
      <svg class="vt vt-on" viewBox="0 0 16 16"><path d="M8 1l6 3v8l-6 3-6-3V4z" fill="none" stroke="#cfe"/></svg>
      <svg class="vt vt-on" viewBox="0 0 16 16"><circle cx="8" cy="8" r="6" fill="#ccc"/><path d="M2 8h12M8 2v12M4 4l8 8M12 4l-8 8" stroke="#444"/></svg>
      <svg class="vt" viewBox="0 0 16 16"><circle cx="8" cy="6" r="3" fill="#eee"/><path d="M8 0v1M2 6h1M13 6h1M3 2l1 1M13 2l-1 1M6 11h4M7 13h2" stroke="#cc8"/></svg>
      <svg class="vt" viewBox="0 0 16 16"><circle cx="10" cy="8" r="5" fill="#3fb0c0"/><circle cx="4" cy="12" r="2" fill="#888"/></svg>
      <i class="vsep"></i>
      <svg class="vt" viewBox="0 0 16 16"><circle cx="8" cy="6" r="5" fill="#aaa"/><path d="M3 12c3 3 7 3 10 0" stroke="#666" fill="none"/></svg>
      <svg class="vt" viewBox="0 0 16 16"><circle cx="9" cy="6" r="4" fill="#ccc"/><path d="M2 13c3-3 6-3 10-2" stroke="#666" fill="none"/></svg>
      <svg class="vt" viewBox="0 0 16 16"><path d="M6 3a6 6 0 000 10" fill="none" stroke="#5bb" stroke-width="1.500"/><path d="M10 3a6 6 0 010 10" fill="none" stroke="#ddd" stroke-width="1.500"/></svg>
      <span class="vt vt-dark"></span>
      <i class="vsep"></i>
      <svg class="vt" viewBox="0 0 16 16"><path d="M2 2h7v10H2z" fill="none" stroke="#999" stroke-dasharray="2 1"/><path d="M8 6l6 6h-3l1 3-2 1-1-3-2 2z" fill="#ddd"/></svg>
      <i class="vsep"></i>
      <svg class="vt" viewBox="0 0 16 16"><path d="M5 1h10v10H5z" fill="#ddd"/><path d="M1 5h10v10H1z" fill="#ddd" stroke="#444"/></svg>
      <svg class="vt" viewBox="0 0 16 16"><path d="M6 1h9v9H6z" fill="none" stroke="#ddd"/><path d="M1 6h9v9H1z" fill="#ddd"/></svg>
      <svg class="vt" viewBox="0 0 16 16"><path d="M1 1h14v14H1z" fill="none" stroke="#ddd"/><path d="M4 4l8 8" stroke="#ddd" stroke-width="2"/></svg>
      <i class="vsep"></i>
      <svg class="vt" viewBox="0 0 16 16"><circle cx="8" cy="8" r="6" fill="#ddd"/><circle cx="8" cy="8" r="2.500" fill="#444"/><path d="M8 2v4M2.800 11l3.500-2M13.200 11l-3.500-2" stroke="#444"/></svg>
      <span class="numfield">0.00</span>
      <svg class="vt vt-half" viewBox="0 0 16 16"><path d="M9 1a7 7 0 010 14z" fill="#eee"/><path d="M7 4a4 4 0 000 8" stroke="#ddd" fill="none"/></svg>
      <span class="numfield">1.00</span>
      <span class="cm-on"></span>
      <div class="cm-combo">ACES 1.0 SDR-video (sRGB)<i class="tri"></i></div>
    </div>
    <div class="scene">
      <svg class="scene-svg" viewBox="331 191 1298 851" width="1298" height="851">
        <rect x="331" y="191" width="1298" height="851" fill="#5f5f5f"/>
        <g class="grid-a">
          <path d="M331 556L1630 570M331 558L1630 573M331 563L1630 580M331 568L1630 588M331 572L1630 593M331 577L1630 602M331 582L1630 613M331 588L1630 620M331 595L1630 630M331 607L1630 647M331 622L1630 670M331 647L1630 705M331 682L1630 757M331 740L1630 842"/>
          <path d="M331 583L560 558M331 593L650 560M331 607L720 563M331 625L800 565M336 649L960 562M331 687L940 562M338 748L851 633L1155 565M584 790L1208 577L1240 566M331 986L684 827"/>
          <path d="M1423 573L1480 1042M1530 573L1623 630"/>
        </g>
        <g class="grid-major">
          <path d="M331 861L1630 1017M1322 571L1000 804"/>
        </g>
        <g class="bbox">
          <path d="M330 462L667 468M330 477L678 480M1163 467L1221 475L1217 730L1213 877L1153 990M1140 870L1213 877M333 543L343 790L351 978M684 480V545L689 767M351 978L684 1030M351 978L390 960M1101 475V1042"/>
        </g>

        <defs>
          <linearGradient id="colgrad" x1="0" x2="1" y1="0" y2="0">
            <stop offset="0" stop-color="#979797"/><stop offset=".92" stop-color="#979797"/><stop offset=".97" stop-color="#7c7c80"/><stop offset="1" stop-color="#5e5e66"/>
          </linearGradient>
          <linearGradient id="slabgrad" x1="0" x2="1" y1="0" y2="0">
            <stop offset="0" stop-color="#93939c"/><stop offset=".9" stop-color="#93939a"/><stop offset="1" stop-color="#60606a"/>
          </linearGradient>
        </defs>

        <!-- lower box right face -->
        <path d="M1087 765L1129 732L1139 733L1138 958L1117 990L1081 1042H1087z" fill="#585858"/>
        <path d="M1087 765L1129 732L1137 735L1087 777z" fill="#707078"/>
        <!-- lower box front -->
        <path d="M684 767L960 788L1087 765V1042H786L689 1027z" fill="#979797"/>
        <path d="M684 767L960 786V791L686 771z" fill="#797980"/>
        <!-- upper right dark faces -->
        <path d="M1101 475L1142 480V538L1099 542L1088 563z" fill="#585858"/>
        <path d="M1103 456L1161 465V479L1101 473z" fill="#5d5d62"/>
        <!-- apron + column -->
        <path d="M677 477H1101C1100 520 1098 540 1088 563V1042H960V567C935 554 915 546 887 545L678 543z" fill="url(#colgrad)"/>
        <path d="M664 457L1103 456V473L664 475z" fill="url(#slabgrad)"/>

        <g class="dash">
          <path d="M879 458V473M896 458V473M916 457V473M937 457V473M954 457V473M968 457V473M984 457V473M1020 457V473M1053 457V473M1079 457V473M1091 457V473M1097 457V473"/>
          <path d="M887 476V545M903 476V548M924 476V534M943 476V541M960 476V550M973 476V1042M987 476V1042M1014 476V1042M1040 476V1042M1062 476V1042M1079 476V1042M1084 476V1042M1087 500V1042M1094 476V540M1098 476V530"/>
          <path d="M678 527H887C905 528 920 531 930 538C940 545 950 550 960 550H1040L1080 548L1099 530L1142 525"/>
          <path d="M960 567H1040L1080 565"/>
          <path d="M685 786L960 808C990 810 1020 810 1039 807L1087 795"/>
          <path d="M960 791C990 792 1020 792 1039 789L1087 777"/>
          <path d="M1087 777L1129 745M1087 795L1120 770"/>
        </g>
        <g class="navy">
          <path d="M664 457L1040 456M664 457V475M664 475L1101 473"/>
          <path d="M677 477L678 543L887 545C915 546 935 554 960 567"/>
          <path d="M1161 465V479L1101 473M1142 480V538L1099 542"/>
          <path d="M684 767L960 788M684 767L689 1027L786 1042"/>
          <path d="M1129 732L1139 733L1138 958L1117 990"/>
        </g>
        <g class="navy-thin">
          <path d="M960 567V788M1099 542L1088 563L1087 640M1103 456L1161 465"/>
        </g>
        <!-- axis gizmo -->
        <g class="gizmo">
          <path d="M356 1000V1016" stroke="#35b54a"/>
          <path d="M356 1016L362 1009" stroke="#3a5fd0"/>
          <path d="M343 1009C342 1019 350 1020 356 1016" stroke="#b8323c" stroke-width="1.500" fill="none"/>
          <text x="353" y="998" fill="#35c94f">y</text>
          <text x="360" y="1012" fill="#3a62e0">z</text>
        </g>
        <!-- mouse cursor -->
        <path d="M1143.500 613.500h10v11h-10z" fill="none" stroke="#111" stroke-width="1.500"/>
        <path d="M1145.500 615.500h6v7h-6z" fill="none" stroke="#eee"/>
        <path d="M1148 620l11 11-5 .5 3 7-3 1.500-3-7-3 3.500z" fill="#fff" stroke="#222" stroke-width=".600"/>
      </svg>
      <div class="hud">
        <span>Verts:</span><b>244</b><b>0</b><b>0</b>
        <span>Edges:</span><b>441</b><b>0</b><b>0</b>
        <span>Faces:</span><b>210</b><b>0</b><b>0</b>
        <span>Tris:</span><b>420</b><b>0</b><b>0</b>
        <span>UVs:</span><b>474</b><b>0</b><b>0</b>
      </div>
    </div>
  </section>

  <div class="vstrip"><span>Modeling Toolkit</span><span>Hypershade</span></div>

  <aside class="right">
    <div class="r-tabs">
      <span class="r-tab-off">ribute Editor</span>
      <span class="r-tab-on">Channel Box / Layer Editor</span>
      <i class="tri-l"></i><i class="tri-r"></i>
    </div>
    <div class="r-icons">
      <svg width="16" height="16" viewBox="0 0 16 16"><path d="M8 1v5M2 13l6-6 6 6" stroke="#ccc"/><circle cx="8" cy="3" r="2" fill="#9c7"/><path d="M0 10h5v5H0z" fill="#4a7fd0"/><path d="M11 10h5v5h-5z" fill="#d05050"/></svg>
      <svg width="16" height="16" viewBox="0 0 16 16"><path d="M3 14V8a5 5 0 0110 0v6" fill="none" stroke="#6aa" stroke-width="3"/></svg>
      <svg width="16" height="16" viewBox="0 0 16 16"><path d="M1 15h14M1 15V5M3 13L14 2" fill="none" stroke="#5bb" stroke-width="1.300"/></svg>
    </div>
    <div class="submenu cb-menu"><span>Channels</span><span>Edit</span><span>Object</span><span>Show</span></div>
    <div class="cb-body">
      <p>Select objects in the scene to view,<br>edit and set keyframes on channels<br>(attributes)</p>
    </div>
    <i class="cb-grip"></i>
    <div class="le-tabs"><span class="le-on">Display</span><span class="le-off">Anim</span></div>
    <div class="submenu le-menu"><span>Layers</span><span>Options</span><span>Help</span></div>
    <div class="le-icons">
      <svg width="16" height="12" viewBox="0 0 16 12"><path d="M0 7l6-4 6 4-6 4z" fill="#ddd"/><path d="M11 1l3 4h-2v4h-2V5H8z" fill="#4fb0a0"/></svg>
      <svg width="16" height="12" viewBox="0 0 16 12"><path d="M0 7l6-4 6 4-6 4z" fill="#ddd"/><path d="M11 11l3-4h-2V3h-2v4H8z" fill="#4fb0a0"/></svg>
      <svg width="18" height="14" viewBox="0 0 18 14"><path d="M0 9l7-5 7 5-7 5z" fill="#ddd"/><path d="M13 1v6M10 4h6" stroke="#4fb0a0" stroke-width="2"/></svg>
      <svg width="18" height="14" viewBox="0 0 18 14"><path d="M0 9l7-5 7 5-7 5z" fill="#ddd"/><circle cx="13" cy="4" r="4" fill="#4fb0a0"/></svg>
    </div>
    <div class="le-list">
      <div class="layer"><span class="lbtn">V</span><span class="lbtn">P</span><span class="lbtn">T</span>
        <svg class="lslash" width="16" height="16" viewBox="0 0 16 16"><path d="M1 15L13 2M15 0v16" stroke="#ccc" fill="none"/></svg><span class="lname">layer1</span></div>
    </div>
    <div class="hscroll hscroll-le"><i class="tri-l"></i><b></b><i class="tri-r"></i></div>
  </aside>
</main>

<footer class="helpline">
  <svg class="qmark" width="14" height="16" viewBox="0 0 14 16"><circle cx="7" cy="8" r="6.500" fill="#9ab648"/><path d="M5 6c0-3 5-3 5 0 0 2-3 2-3 4M7 12v1.500" fill="none" stroke="#2e3a1a" stroke-width="1.300"/></svg>
  <span class="helptext">Move Tool: Select an object to move.</span>
  <span class="mel">MEL</span>
  <div class="cmd cmd-a"></div>
  <div class="cmd cmd-b"></div>
  <svg class="script-ic" width="18" height="20" viewBox="0 0 18 20"><path d="M0 0h18v4H0z" fill="#555"/><path d="M1 1h2M4 1h2M7 1h2" stroke="#ddd"/><path d="M0 5h18v15H0z" fill="#d4d4d4"/><path d="M7 8C5 8 6 12 5 12c1 0 0 4 2 4M11 8c2 0 1 4 2 4-1 0 0 4-2 4" fill="none" stroke="#333"/><path d="M9 10v1M9 13v1" stroke="#333"/></svg>
</footer>

<div class="overlay-logo">M</div>
<div class="watermark"><svg width="44" height="36" viewBox="0 0 44 36"><rect width="44" height="36" rx="5" fill="#a8a8a8" fill-opacity=".55"/><path d="M8 26c6-14 20-18 30-16-8 4-12 10-14 18z" fill="#5c5c5c"/></svg><span>tafe.cc</span></div>
<div class="subtitle">需要通过拉伸面制作</div>
</body>
</html>
```

FILE: styles.css
```css
* { box-sizing: border-box; }
html, body { margin: 0; padding: 0; }
body {
  position: relative;
  width: 1920px;
  height: 1080px;
  overflow: hidden;
  background: #444;
  color: #c8c8c8;
  font: 11px/1 Roboto, "Noto Sans", sans-serif;
  display: flex;
  flex-direction: column;
}
i { display: block; font-style: normal; }
.defs { position: absolute; }

/* title bar */
.titlebar { height: 23px; flex: none; background: #fff; color: #222; display: flex; align-items: center; font-size: 12px; padding-left: 3px; }
.applogo { width: 16px; height: 17px; margin-right: 4px; background: #dfeeee; color: #2f9fa6; font: bold 15px/17px "Liberation Sans", sans-serif; text-align: center; }
.title-text { letter-spacing: -.22px; }
.winbtns { margin-left: auto; display: flex; gap: 33px; padding-right: 19px; }

/* menu bar */
.menubar { height: 27px; flex: none; display: flex; align-items: center; gap: 15.400px; padding: 1px 0 0 7px; letter-spacing: .15px; color: #c4c4c4; }
.home { margin-right: 1px; }
.workspace { margin-left: auto; display: flex; align-items: center; gap: 5px; padding-right: 7px; color: #aaa; }
.workspace span { letter-spacing: -.2px; }
.workspace svg { margin-left: 6px; }
.combo { display: flex; align-items: center; background: #5a5a5a; color: #c8c8c8; padding: 0 6px; }
.combo-ws { width: 192px; height: 20px; justify-content: space-between; color: #cfcfcf; background: #545454; }
.combo-mode { width: 98px; height: 20px; margin-left: 15px; justify-content: space-between; background: #5a5a5a; }
.tri { width: 0; height: 0; border-left: 5px solid transparent; border-right: 5px solid transparent; border-top: 6px solid #c8c8c8; }
.tri-up { border-top: 0; border-bottom: 6px solid #c8c8c8; }
.tri-l { width: 0; height: 0; border-top: 5px solid transparent; border-bottom: 5px solid transparent; border-right: 6px solid #c8c8c8; }
.tri-r { width: 0; height: 0; border-top: 5px solid transparent; border-bottom: 5px solid transparent; border-left: 6px solid #c8c8c8; }

/* status line */
.statusline { height: 26px; flex: none; display: flex; align-items: center; }
.st { width: 20px; height: 20px; flex: none; margin-right: 3.600px; }
.ipr { font: bold 7px "Liberation Sans", sans-serif; fill: #333; }
.st-first { margin-left: 11px; }
.st-on { background: #5285a6; width: 24px; height: 26px; padding: 3px; }
.st-sel { margin-left: 11px; }
.st-snap1 { margin-left: 10px; }
.st-r1 { margin-left: 10px; }
.sep { width: 1px; height: 20px; flex: none; background: #777; }
.s-a { margin-left: 9px; }
.s-b { margin-left: 6px; }
.s-c { margin-left: 22px; }
.s-d { margin-left: 6px; }
.s-e { margin-left: 11px; }
.s-f { margin-left: 23px; }
.s-g { margin-left: 9px; }
.tri-small { flex: none; margin-left: 2px; border-left-width: 3px; border-right-width: 3px; border-top-width: 4px; border-top-color: #999; }
.tri-sym { margin-left: 17px; }
.field { height: 20px; flex: none; display: flex; align-items: center; background: #4a4a4a; color: #cfcfcf; padding-left: 3px; }
.field-live { width: 96px; margin-left: 11px; }
.field-sym { width: 97px; margin-left: 8px; padding-left: 4px; }
.status-right { margin-left: auto; display: flex; align-items: center; padding-right: 3px; }
.status-right .st { margin-right: 2.800px; }
.status-right .st-last { width: 22px; margin-right: 0; }

/* shelf */
.shelf { height: 74px; flex: none; display: flex; padding-top: 6px; border-top: 1px solid #383838; }
.shelf-side { margin: 2px 0 7px 14px; background: #3a3a3a; flex: none; display: flex; flex-direction: column; align-items: center; justify-content: space-between; padding: 8px 0 5px; width: 18px; }
.minus { width: 11px; height: 3px; background: #b8b8b8; }
.shelf-main { margin-left: 8px; flex: 1; min-width: 0; }
.shelf-tabs { height: 19px; display: flex; align-items: stretch; background: #3c3c3c; padding: 1px 0 0 8px; gap: 24px; color: #8e8e8e; letter-spacing: .25px; }
.shelf-tabs span { display: flex; align-items: center; }
.shelf-tabs .active { background: #484848; color: #d8d8d8; padding: 0 10px; margin: 0 -10px; }
.shelf-icons { display: flex; align-items: center; height: 38px; margin-left: 1px; }
.si, .cell { width: 34.850px; height: 28px; flex: none; padding: 0 3.400px; }
.cell { display: flex; align-items: center; justify-content: center; padding: 0; }
.shelf-sep { width: 2px; height: 37px; background: #828282; flex: none; }
.cell-t { font: 40px/28px "Liberation Serif", serif; color: #e3a05c; }
.svgbox { width: 25px; height: 29px; background: #e3a05c; color: #3a3a3a; font: bold 11px/27px "DejaVu Sans", sans-serif; text-align: center; }
.cell-snow { position: relative; }
.snow { width: 24px; height: 24px; position: absolute; left: 5px; top: -2px; }
.cell-snow span { position: absolute; left: 5px; top: 17px; color: #4fb0a0; font-weight: bold; font-size: 11px; }
.shelf-scroll { width: 14px; margin: 26px 7px 0 auto; flex: none; display: flex; flex-direction: column; align-items: center; gap: 3px; height: 36px; }
.shelf-scroll b { width: 12px; height: 12px; border-radius: 6px; background: #5e5e5e; }

/* main */
.main { height: 898px; flex: none; display: flex; }

/* toolbox */
.toolbox { width: 40px; flex: none; margin-left: 4px; display: flex; flex-direction: column; align-items: center; padding-top: 11px; position: relative; }
.tool { width: 34px; height: 34px; flex: none; margin-bottom: 3px; }
.tool-on { width: 36px; height: 35px; background: #5285a6; flex: none; margin-bottom: 2px; padding: 1px; }
.tool-on svg, .view-on svg { display: block; width: 100%; height: 100%; }
.tool-gap { margin-top: 36px; margin-bottom: 0; }
.tool-line { width: 36px; height: 2px; background: #8a8a8a; flex: none; margin-top: 8px; }
.view { width: 28px; flex: none; display: block; }
.view-one { height: 28px; margin-top: 9px; }
.view-four { height: 27px; margin-top: 10px; }
.view-two { height: 28px; margin-top: 9px; }
.view-on { width: 37px; height: 38px; background: #4c7a9a; margin-top: 3px; padding: 4px; flex: none; }
.tool-line2 { margin-top: 6px; }
.mag { width: 36px; height: 35px; margin-top: 5px; flex: none; }

/* outliner */
.outliner { width: 276px; flex: none; margin: 0 0 8px 4px; display: flex; flex-direction: column; background: #404040; }
.ol-tabs { height: 18px; background: #3a3a3a; flex: none; display: flex; }
.ol-tab { width: 68px; background: #464646; color: #d0d0d0; padding: 4px 0 0 10px; letter-spacing: .2px; }
.submenu { display: flex; align-items: center; color: #b4b4b4; letter-spacing: .3px; }
.ol-menu { height: 20px; flex: none; gap: 15px; padding-left: 9px; }
.ol-search { height: 26px; flex: none; display: flex; align-items: center; padding-left: 6px; gap: 8px; }
.searchbox { width: 242px; height: 18px; background: #2c2c2c; color: #777; display: flex; align-items: center; justify-content: space-between; padding: 0 3px; }
.ol-body { flex: 1; display: flex; min-height: 0; background: #3a3a3a; }
.ol-list { list-style: none; margin: 0; padding: 0 0 0 37px; flex: 1; }
.ol-list li { height: 20px; display: flex; align-items: center; color: #cfcfcf; letter-spacing: .3px; position: relative; }
.ol-list .dim { color: #6f6f6f; }
.ol-ic { width: 16px; height: 14px; flex: none; margin-right: 4px; }
.expand { position: absolute; left: -15px; top: 5px; width: 9px; height: 9px; border: 1px solid #aaa; background: linear-gradient(#aaa, #aaa) center / 5px 1px no-repeat, linear-gradient(#aaa, #aaa) center / 1px 5px no-repeat; }
.vscroll { width: 10px; margin-right: 4px; flex: none; display: flex; flex-direction: column; align-items: center; gap: 2px; padding: 0 0 4px; }
.vscroll b { flex: 1; width: 9px; background: #5a5a5a; }
.hscroll { display: flex; align-items: center; flex: none; gap: 3px; }
.hscroll b { height: 10px; background: #5c5c5c; border-radius: 2px; }
.hscroll-ol { height: 18px; background: #3a3a3a; padding: 0 0 0 7px; }
.hscroll-ol b { width: 235px; }

/* viewport */
.viewport { width: 1300px; flex: none; margin: 2px 0 5px 6px; border: 1px solid #9c9c9c; display: flex; flex-direction: column; background: #3f3f3f; }
.vp-menu { height: 19px; flex: none; display: flex; align-items: center; gap: 15.500px; padding-left: 8px; color: #bcbcbc; letter-spacing: .3px; }
.vp-tools { height: 19px; flex: none; display: flex; align-items: center; padding-left: 4px; }
.vsep { width: 1px; height: 15px; background: #808080; flex: none; margin: 0 4px; }
.vt { width: 16px; height: 16px; flex: none; margin-right: 3.200px; }
.vt-on { background: #5285a6; width: 18px; height: 18px; margin-right: 2px; padding: 1px; }
.vt-dark { display: block; background: #474747; }
.vt-half { margin: 0 4px 0 5px; }
.numfield { width: 36px; height: 16px; background: #333; color: #c8c8c8; display: flex; align-items: center; justify-content: center; flex: none; margin-left: 2px; }
.cm-on { width: 17px; height: 18px; background: radial-gradient(circle, #49a8d0 0 5px, #5285a6 6px); margin-left: 7px; flex: none; }
.cm-combo { width: 199px; height: 18px; background: #505050; display: flex; align-items: center; justify-content: space-between; padding: 0 4px 0 5px; flex: none; color: #c4c4c4; }
.scene { flex: 1; position: relative; }
.scene-svg { display: block; }
.grid-a path { fill: none; stroke: #4c4c4c; stroke-width: 1; }
.grid-major path { fill: none; stroke: #454545; stroke-width: 1.500; }
.bbox path { fill: none; stroke: #8b8b8b; stroke-width: 1; opacity: .75; }
.dash path { fill: none; stroke: #17172e; stroke-width: 1; stroke-dasharray: 2 2; }
.navy path { fill: none; stroke: #14147a; stroke-width: 2.800; stroke-linejoin: round; }
.navy-thin path { fill: none; stroke: #1c1c6a; stroke-width: 1.300; }
.gizmo text { font: bold 9px "Liberation Sans", sans-serif; }
.hud { position: absolute; left: 15px; top: -4px; display: grid; grid-template-columns: 77px 50px 96px 34px; grid-auto-rows: 20.050px; align-items: center; font-weight: 500; font-size: 10.500px; color: #dadada; letter-spacing: .1px; }
.hud b { font-weight: 500; text-align: center; }

/* right */
.vstrip { width: 25px; flex: none; display: flex; flex-direction: column; align-items: center; gap: 22px; padding-top: 12px; color: #7f7f7f; }
.vstrip span { writing-mode: vertical-rl; transform: rotate(180deg); letter-spacing: .3px; }
.right { width: 265px; flex: none; display: flex; flex-direction: column; position: relative; padding-bottom: 8px; }
.r-tabs { height: 18px; flex: none; display: flex; align-items: center; background: #3c3c3c; color: #909090; position: relative; }
.r-tab-off { width: 80px; white-space: nowrap; margin-left: -3px; padding-right: 0; letter-spacing: .3px; flex: none; }
.r-tab-on { background: #474747; color: #dcdcdc; height: 18px; width: 146px; display: flex; align-items: center; padding-left: 12px; white-space: nowrap; letter-spacing: .1px; flex: none; }
.r-tabs .tri-l { margin-left: 15px; }
.r-tabs .tri-r { margin-left: 8px; }
.r-icons { height: 20px; flex: none; display: flex; justify-content: flex-end; align-items: center; gap: 5px; padding-right: 8px; }
.cb-menu { height: 20px; flex: none; gap: 15px; padding-left: 10px; }
.cb-body { flex: 1; min-height: 0; }
.cb-body p { margin: 176px 0 0; text-align: center; font-weight: 500; color: #d0d0d0; line-height: 12.500px; width: 262px; letter-spacing: .15px; }
.cb-grip { height: 2px; width: 85px; margin: 0 0 10px 90px; flex: none; background: repeating-linear-gradient(90deg, #777 0 1px, transparent 1px 3px); }
.le-tabs { height: 19px; flex: none; display: flex; align-items: stretch; background: #3c3c3c; margin: 0 2px 0 5px; }
.le-on { width: 58px; background: #484848; color: #dcdcdc; padding: 3px 0 0 9px; }
.le-off { width: 48px; background: #404040; color: #787878; padding: 3px 0 0 9px; margin-left: 2px; }
.le-menu { height: 17px; flex: none; gap: 15px; padding-left: 7px; margin-left: 5px; }
.le-icons { height: 27px; flex: none; display: flex; align-items: center; justify-content: flex-end; gap: 8px; padding-right: 8px; }
.le-list { height: 353px; flex: none; background: #2d2d2d; margin: 0 3px 0 5px; padding: 3px 0 0 5px; }
.layer { display: flex; align-items: center; gap: 2px; height: 16px; color: #cfcfcf; }
.lbtn { width: 20px; height: 15px; background: #363636; display: flex; align-items: center; justify-content: center; }
.lslash { margin-left: 3px; }
.lname { color: #dcdcdc; }
.hscroll-le { height: 17px; margin: 0 5px; padding-left: 2px; background: #3a3a3a; }
.hscroll-le b { width: 160px; }
.hscroll-le .tri-r { margin-left: auto; margin-right: 3px; }

/* help line */
.helpline { height: 32px; flex: none; display: flex; align-items: center; border-top: 1px solid #383838; }
.qmark { margin-left: 15px; flex: none; }
.helptext { margin-left: 9px; width: 965px; flex: none; font-size: 10px; color: #b8b8b8; white-space: nowrap; }
.mel { color: #ccc; font-size: 11px; width: 22px; flex: none; }
.cmd { height: 23px; background: #2c2c2c; flex: none; }
.cmd-a { width: 342px; margin-left: 13px; }
.cmd-b { width: 496px; margin-left: 9px; }
.script-ic { margin-left: 7px; flex: none; }

/* overlays */
.overlay-logo { position: absolute; left: 6px; top: 1004px; color: #3aa7a9; font: bold 42px/42px "Liberation Sans", sans-serif; transform: scaleX(.85); transform-origin: left; }
.watermark { position: absolute; left: 6px; top: 1032px; display: flex; align-items: center; gap: 7px; color: rgba(190, 190, 190, .38); font: bold 41px/36px Roboto, sans-serif; pointer-events: none; }
.subtitle { position: absolute; left: 0; right: 0; top: 978px; text-align: center; color: #fff; font: 400 48px/68px "Noto Sans CJK SC", sans-serif; -webkit-text-stroke: 5px #000; paint-order: stroke fill; letter-spacing: -.2px; }
```
